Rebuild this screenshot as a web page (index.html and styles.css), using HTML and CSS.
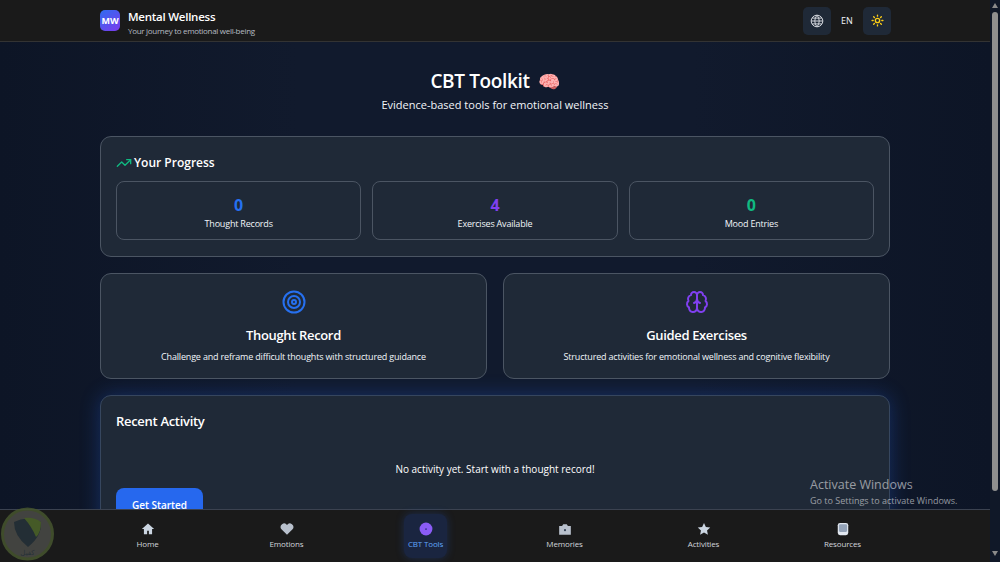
FILE: index.html
```html
<!DOCTYPE html>
<html lang="en">
<head>
<meta charset="utf-8">
<title>Mental Wellness</title>
<link rel="stylesheet" href="styles.css">
</head>
<body>
<div class="window">
  <div class="page">
    <header class="topbar">
      <div class="brand">
        <div class="logo">MW</div>
        <div class="brand-text">
          <div class="brand-name">Mental Wellness</div>
          <div class="brand-sub">Your journey to emotional well-being</div>
        </div>
      </div>
      <div class="top-actions">
        <button class="icon-btn">
          <svg width="14" height="14" viewBox="0 0 24 24" fill="none" stroke="#d1d5db" stroke-width="1.700"><circle cx="12" cy="12" r="10"/><path d="M2 12h20M3.500 7h17M3.500 17h17M12 2a15 15 0 0 1 0 20a15 15 0 0 1 0-20"/></svg>
        </button>
        <span class="lang">EN</span>
        <button class="icon-btn">
          <svg width="13" height="13" viewBox="0 0 24 24" fill="none" stroke="#facc15" stroke-width="2.500" stroke-linecap="round"><circle cx="12" cy="12" r="4"/><path d="M12 2v2M12 20v2M4.900 4.900l1.400 1.400M17.700 17.700l1.400 1.400M2 12h2M20 12h2M4.900 19.100l1.400-1.400M17.700 6.300l1.400-1.400"/></svg>
        </button>
      </div>
    </header>

    <main class="content">
      <section class="hero">
        <h1 class="hero-title"><span class="hero-text">CBT Toolkit</span> <span class="emoji">🧠</span></h1>
        <p class="hero-sub">Evidence-based tools for emotional wellness</p>
      </section>

      <section class="card progress">
        <h2 class="progress-title">
          <svg width="16" height="16" viewBox="0 0 24 24" fill="none" stroke="#10b981" stroke-width="2" stroke-linecap="round" stroke-linejoin="round"><path d="M22 7l-8.500 8.500-5-5L2 17"/><path d="M16 7h6v6"/></svg>
          Your Progress
        </h2>
        <div class="stats">
          <div class="stat"><div class="stat-num blue">0</div><div class="stat-label">Thought Records</div></div>
          <div class="stat"><div class="stat-num purple">4</div><div class="stat-label">Exercises Available</div></div>
          <div class="stat"><div class="stat-num green">0</div><div class="stat-label">Mood Entries</div></div>
        </div>
      </section>

      <section class="tools">
        <div class="card tool">
          <svg class="tool-icon" width="24" height="24" viewBox="0 0 24 24" fill="none" stroke="#2670f0" stroke-width="2"><circle cx="12" cy="12" r="10.500"/><circle cx="12" cy="12" r="6"/><circle cx="12" cy="12" r="2"/></svg>
          <h3 class="tool-title">Thought Record</h3>
          <p class="tool-desc">Challenge and reframe difficult thoughts with structured guidance</p>
        </div>
        <div class="card tool">
          <svg class="tool-icon" width="24" height="24" viewBox="0 0 24 24" fill="none" stroke="#8040f0" stroke-width="2" stroke-linecap="round" stroke-linejoin="round"><path d="M12 5a3 3 0 1 0-5.997.125 4 4 0 0 0-2.526 5.770 4 4 0 0 0 .556 6.588A4 4 0 1 0 12 18Z"/><path d="M12 5a3 3 0 1 1 5.997.125 4 4 0 0 1 2.526 5.770 4 4 0 0 1-.556 6.588A4 4 0 1 1 12 18Z"/><path d="M15 13a4.500 4.500 0 0 1-3-4 4.500 4.500 0 0 1-3 4"/><path d="M12 18V5"/></svg>
          <h3 class="tool-title">Guided Exercises</h3>
          <p class="tool-desc">Structured activities for emotional wellness and cognitive flexibility</p>
        </div>
      </section>

      <section class="card recent">
        <h2 class="recent-title">Recent Activity</h2>
        <p class="recent-empty">No activity yet. Start with a thought record!</p>
        <button class="cta">Get Started</button>
      </section>
    </main>

    <nav class="bottom-nav">
      <a class="nav-item">
        <svg width="14" height="14" viewBox="0 0 24 24" fill="#cbd5e1"><path d="M12 2.500 1.500 12H5v9h5.500v-6h3v6H19v-9h3.500z"/></svg>
        <span>Home</span>
      </a>
      <a class="nav-item">
        <svg width="14" height="14" viewBox="0 0 24 24" fill="#b8c0cc"><path d="M12 22 2.500 12.500A6 6 0 0 1 12 5a6 6 0 0 1 9.500 7.500z"/></svg>
        <span>Emotions</span>
      </a>
      <a class="nav-item active">
        <svg width="14" height="14" viewBox="0 0 24 24"><circle cx="12" cy="12" r="11" fill="#8b5cf6"/><circle cx="12" cy="12" r="1.500" fill="#312e81"/></svg>
        <span>CBT Tools</span>
      </a>
      <a class="nav-item">
        <svg width="14" height="14" viewBox="0 0 24 24"><path d="M2 7h5l2-3h6l2 3h5v15H2z" fill="#b8c0cc"/><circle cx="12" cy="14" r="1.800" fill="#334155"/></svg>
        <span>Memories</span>
      </a>
      <a class="nav-item">
        <svg width="14" height="14" viewBox="0 0 24 24" fill="#cbd5e1"><path d="m12 1.500 3.200 6.900 7.500.9-5.500 5.100 1.500 7.400L12 18.200l-6.700 3.600 1.500-7.400L1.300 9.300l7.500-.9z"/></svg>
        <span>Activities</span>
      </a>
      <a class="nav-item">
        <svg width="14" height="14" viewBox="0 0 24 24"><rect x="3" y="1.500" width="18" height="21" rx="4" fill="#e2e8f0"/><rect x="5" y="4" width="14" height="13" rx="2" fill="#94a3b8"/></svg>
        <span>Resources</span>
      </a>
    </nav>
  </div>

  <aside class="scrollbar">
    <span class="arrow-up"></span>
    <span class="thumb"></span>
    <span class="arrow-down"></span>
  </aside>

  <div class="watermark">
    <svg width="56" height="56" viewBox="0 0 56 56"><circle cx="27.500" cy="28" r="25" fill="#4a4b47" stroke="#46552f" stroke-width="3"/><path d="M14 16q13-7 27 0q1 14-13 25q-14-11-14-25z" fill="#25323a"/><path d="M24 12q10-1 17 4q0 11-5 15q-4-10-12-19z" fill="#4d662a"/><text class="watermark-text" x="27.500" y="49" text-anchor="middle">كفيل</text></svg>
  </div>

  <div class="activate">
    <div class="activate-title">Activate Windows</div>
    <div class="activate-sub">Go to Settings to activate Windows.</div>
  </div>
</div>
</body>
</html>
```
FILE: styles.css
```css
* { box-sizing: border-box; }
html, body { margin: 0; height: 100%; overflow: hidden; background: #0f172a; }
body {
  font-family: "Open Sans", "Noto Sans", "Liberation Sans", sans-serif;
  color: #fff;
}
.window { position: relative; display: flex; height: 100vh; overflow: hidden; }
.page { flex: 1; min-width: 0; display: flex; flex-direction: column; }

.scrollbar {
  width: 10px;
  background: #101828;
  display: flex;
  flex-direction: column;
  align-items: center;
}
.arrow-up, .arrow-down {
  width: 0;
  height: 0;
  border-left: 3px solid transparent;
  border-right: 3px solid transparent;
}
.arrow-up { margin-top: 3px; border-bottom: 5px solid #8a8a8a; }
.arrow-down { margin-top: 60px; border-top: 5px solid #8a8a8a; }
.thumb { width: 6px; height: 479px; margin-top: 4px; border-radius: 3px; background: #8f8f8f; }

.topbar {
  height: 42px;
  flex: none;
  background: #1a1a1a;
  border-bottom: 1px solid #333;
  padding: 0 99px 0 100px;
  display: flex;
  align-items: center;
  justify-content: space-between;
}
.brand { display: flex; align-items: center; gap: 8px; }
.logo {
  width: 20px;
  height: 21px;
  border-radius: 5px;
  background: linear-gradient(145deg, #2f6cf0, #7c3aed);
  font-size: 9px;
  font-weight: 700;
  display: flex;
  align-items: center;
  justify-content: center;
}
.brand-text { padding-top: 4px; }
.brand-name { font-size: 11.5px; font-weight: 600; line-height: 15px; letter-spacing: -.25px; }
.brand-sub { font-size: 8px; color: #b6bac2; line-height: 12px; margin-top: 1px; letter-spacing: -.3px; }
.top-actions { display: flex; align-items: center; gap: 9px; }
.icon-btn {
  width: 28px;
  height: 28px;
  border: 0;
  padding: 0;
  border-radius: 5px;
  background: #1f2937;
  display: flex;
  align-items: center;
  justify-content: center;
}
.lang { font-size: 9px; font-weight: 500; width: 14px; text-align: center; color: #f1f5f9; }

.content {
  flex: 1;
  min-height: 0;
  overflow: hidden;
  padding: 0 100px;
  background: linear-gradient(90deg, #0d1526 0%, #111a2d 30%, #111a2d 70%, #0d1526 100%);
}
.hero { text-align: center; padding-top: 26px; }
.hero-title { margin: 0; font-size: 19px; font-weight: 600; line-height: 26px; }
.hero-text { letter-spacing: -.35px; margin-right: 3px; }
.emoji { font-size: 18px; }
.hero-sub { margin: 3px 0 0; font-size: 11px; line-height: 16px; color: #f1f5f9; }

.card {
  background: #1f2937;
  border: 1px solid #4b5563;
  border-radius: 11px;
}
.progress { margin-top: 23px; height: 121px; padding: 16px 15px; }
.progress-title {
  margin: 0;
  font-size: 12px;
  font-weight: 600;
  line-height: 20px;
  display: flex;
  align-items: center;
  gap: 2px;
}
.stats { margin-top: 8px; display: grid; grid-template-columns: repeat(3, 1fr); gap: 11px; }
.stat {
  height: 59px;
  border: 1px solid #4b5563;
  border-radius: 8px;
  text-align: center;
  padding-top: 13px;
}
.stat-num { font-size: 16px; font-weight: 700; line-height: 20px; }
.blue { color: #2670f0; }
.purple { color: #8040f0; }
.green { color: #10b981; }
.stat-label { font-size: 9px; line-height: 14px; margin-top: 2px; color: #f1f5f9; letter-spacing: -.2px; }

.tools { margin-top: 16px; display: grid; grid-template-columns: 1fr 1fr; gap: 16px; }
.tool { height: 106px; text-align: center; padding-top: 16px; }
.tool-icon { display: block; margin: 0 auto; }
.tool-title { margin: 12px 0 0; font-size: 13px; font-weight: 600; line-height: 18px; letter-spacing: -.35px; }
.tool-desc { margin: 6px 0 0; font-size: 9px; line-height: 14px; color: #f1f5f9; letter-spacing: -.18px; }

.recent {
  margin-top: 16px;
  height: 180px;
  padding: 15px 15px;
  border-color: #36465e;
  box-shadow: 0 0 20px rgba(37, 99, 235, .3);
}
.recent-title { margin: 0; font-size: 13px; font-weight: 600; line-height: 20px; letter-spacing: -.3px; }
.recent-empty { margin: 30px 0 0; font-size: 10px; line-height: 16px; text-align: center; }
.cta {
  display: block;
  margin-top: 11px;
  width: 87px;
  height: 34px;
  border: 0;
  border-radius: 8px;
  background: #2668ee;
  color: #fff;
  font: 600 10px "Open Sans", sans-serif;
}

.bottom-nav {
  flex: none;
  height: 53px;
  background: #1a1a1a;
  border-top: 1px solid #3b4250;
  padding: 0 78px 0 78px;
  display: grid;
  grid-template-columns: repeat(6, 1fr);
  align-items: center;
  justify-items: center;
}
.nav-item {
  width: 43px;
  height: 44px;
  border-radius: 8px;
  display: flex;
  flex-direction: column;
  align-items: center;
  justify-content: center;
  gap: 2px;
  font-size: 8px;
  line-height: 12px;
  font-weight: 500;
  color: #d1d5db;
  white-space: nowrap;
  letter-spacing: -.15px;
}
.nav-item.active {
  background: #1a2540;
  color: #60a5fa;
  box-shadow: 0 0 8px rgba(37, 99, 235, .25);
}

.watermark { position: absolute; left: 0; bottom: 0; line-height: 0; opacity: .85; }
.watermark-text { font-family: "DejaVu Sans", sans-serif; font-size: 7px; fill: #2b363d; }
.activate { position: absolute; left: 810px; top: 477px; color: rgba(255, 255, 255, .55); pointer-events: none; }
.activate-title { font-size: 12.500px; line-height: 16px; }
.activate-sub { font-size: 9px; line-height: 14px; margin-top: 1px; }
```
